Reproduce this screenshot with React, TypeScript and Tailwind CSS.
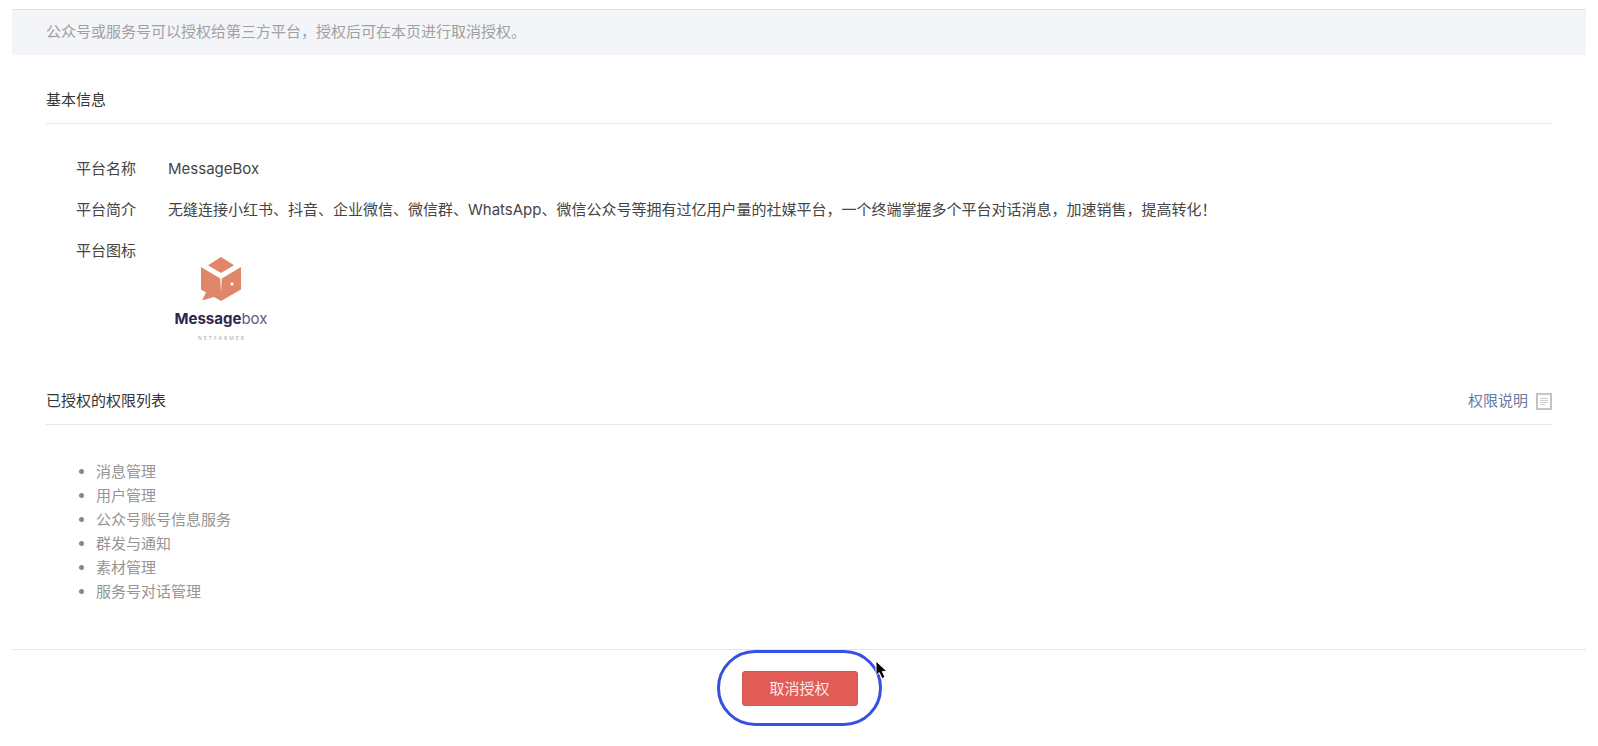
import type { ReactNode } from "react";

const permissions = [
  "消息管理",
  "用户管理",
  "公众号账号信息服务",
  "群发与通知",
  "素材管理",
  "服务号对话管理",
];

function PlatformLogo() {
  return (
    <svg
      width="106"
      height="96"
      viewBox="0 0 106 96"
      role="img"
      aria-label="Messagebox"
      className="block"
    >
      <g fill="#e0876a">
        <path d="M53 6 66 14.200 53 22 40 14.200Z" />
        <path d="M33 16 52.200 27.500 53 41 53.800 27.500 73 16V38.500L53 50 46 46 34 49.500 38 41.500 33 38.500Z" />
      </g>
      <circle cx="64" cy="33" r="1.500" fill="#fff" />
      <text
        x="53"
        y="73"
        textAnchor="middle"
        fontSize="15"
        fill="#2a2850"
        fontFamily="Inter, sans-serif"
      >
        <tspan fontWeight="700">Message</tspan>
        <tspan fill="#5d5a80">box</tspan>
      </text>
      <text
        x="54"
        y="89"
        textAnchor="middle"
        fontSize="5"
        letterSpacing="2"
        fill="#a9a9b4"
        fontFamily="Inter, sans-serif"
      >
        NETFARMER
      </text>
    </svg>
  );
}

function DocIcon() {
  return (
    <svg width="16" height="17" viewBox="0 0 16 17" aria-hidden="true">
      <rect x="1" y="1" width="14" height="15" fill="#fff" stroke="#c4c4c4" strokeWidth="2" />
      <path d="M4 5.500h8M4 7.500h8M4 9.500h8M4 11.500h5" stroke="#cfcfcf" />
    </svg>
  );
}

function Cursor() {
  return (
    <svg
      width="14"
      height="20"
      viewBox="0 0 14 20"
      aria-hidden="true"
      className="absolute left-[155px] top-[7px]"
    >
      <path
        d="M1 1V15.500L4.200 12.600 7 18.600 10 17.200 7.300 11.400H12Z"
        fill="#000"
        stroke="#fff"
      />
    </svg>
  );
}

function SectionHeader({ title, children }: { title: string; children?: ReactNode }) {
  return (
    <div className="flex items-center justify-between border-b border-[#e7e7eb] pb-[11px]">
      <h2 className="text-[#353535]">{title}</h2>
      {children}
    </div>
  );
}

function Field({ label, children }: { label: string; children: ReactNode }) {
  return (
    <div className="flex gap-8">
      <dt className="w-15 shrink-0">{label}</dt>
      <dd>{children}</dd>
    </div>
  );
}

export default function App() {
  return (
    <main className="mx-3 pt-[9px] font-['Inter','Noto_Sans_CJK_SC',sans-serif] text-[15px] leading-6 text-[#454545]" lang="zh-CN">
      <p className="border-t border-[#e0e1e5] bg-[#f4f5f9] px-[34px] pt-[10px] pb-[11px] text-[#a0a0a0]">
        公众号或服务号可以授权给第三方平台，授权后可在本页进行取消授权。
      </p>

      <section className="px-[34px] pt-[33px]">
        <SectionHeader title="基本信息" />
        <dl className="flex flex-col gap-[17px] pt-[33px] pl-[30px]">
          <Field label="平台名称">MessageBox</Field>
          <Field label="平台简介">
            无缝连接小红书、抖音、企业微信、微信群、WhatsApp、微信公众号等拥有过亿用户量的社媒平台，一个终端掌握多个平台对话消息，加速销售，提高转化！
          </Field>
          <Field label="平台图标">
            <div className="pt-3">
              <PlatformLogo />
            </div>
          </Field>
        </dl>
      </section>

      <section className="px-[34px] pt-[42px]">
        <SectionHeader title="已授权的权限列表">
          <a href="#permissions" className="flex items-center gap-2 text-[#6b7a9f]">
            权限说明
            <DocIcon />
          </a>
        </SectionHeader>
        <ul id="permissions" className="list-disc pt-[35px] pl-[50px] text-[#959595] marker:text-[#888888]">
          {permissions.map((name) => (
            <li key={name}>{name}</li>
          ))}
        </ul>
      </section>

      <footer className="mt-[45px] flex justify-center border-t border-[#e7e7eb]">
        <div className="relative rounded-full border-3 border-[#3650e0] pt-[18px] pr-[21px] pb-[17px] pl-[22px]">
          <button
            type="button"
            className="block h-[35px] w-[116px] rounded-[3px] border border-[#d05552] bg-[#e15b57] text-[#fbe9e8]"
          >
            取消授权
          </button>
          <Cursor />
        </div>
      </footer>
    </main>
  );
}
